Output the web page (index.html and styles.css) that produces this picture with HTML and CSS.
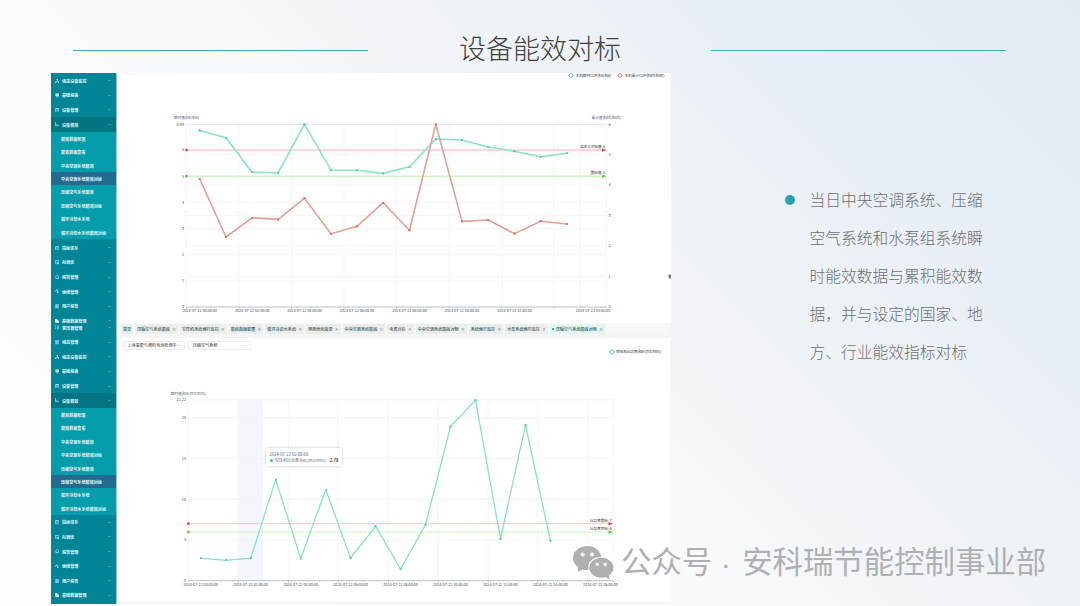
FILE: index.html
```html
<!DOCTYPE html>
<html lang="zh-CN">
<head>
  <meta charset="UTF-8" />
  <meta name="viewport" content="width=device-width, initial-scale=1.0" />
  <title>设备能效对标</title>
  <link rel="stylesheet" href="styles.css">
</head>
<body>

  <!-- 图标 -->
  <svg class="defs" width="0" height="0">
    <symbol id="i-node" viewBox="0 0 10 10"><path d="M3.5 0h3v3h-1v2h3v2H10v3H7V7h.5V6h-5v1H3v3H0V7h1.5V5h3V3h-1z"/></symbol>
    <symbol id="i-cup" viewBox="0 0 10 10"><path d="M1 1h8v5L7 8H3L1 6zM3 9h4v1H3z"/><path class="cut" d="M3 3l2 2 2-2"/></symbol>
    <symbol id="i-doc" viewBox="0 0 10 10"><path class="ln" d="M1.5 1h7v8.5h-7zM1.5 2h7M3 5h4"/></symbol>
    <symbol id="i-bars" viewBox="0 0 10 10"><path class="ln" d="M1 0v9h9M4 4v4M7 6v2"/></symbol>
    <symbol id="i-edit" viewBox="0 0 10 10"><path class="ln" d="M1 1h8v8H1zM3 7l4-4M3 3h2M5 7h2"/></symbol>
    <symbol id="i-ai" viewBox="0 0 10 10"><path class="ln" d="M1 1h7v3M1 1v6l2 2h2M5 5h4v4H6zM4 4l5 6"/></symbol>
    <symbol id="i-bell" viewBox="0 0 10 10"><path class="ln" d="M2 8V3l2-2h2l2 2v5zM3 9.5h4"/></symbol>
    <symbol id="i-pulse" viewBox="0 0 10 10"><path class="ln" d="M0 5h2l2-4 2 8 2-5h2"/></symbol>
    <symbol id="i-report" viewBox="0 0 10 10"><path class="ln" d="M0 2h10v7H0zM3 1v8M7 1v8M3 5h4"/></symbol>
    <symbol id="i-file" viewBox="0 0 10 10"><path d="M0 0h5v3h3v2h2v5H3V8H0z"/></symbol>
    <symbol id="i-list" viewBox="0 0 10 10"><path class="ln" d="M0 2h2M4 2h6M0 5h2M4 5h6M0 8h2M4 8h6"/></symbol>
    <symbol id="i-down" viewBox="0 0 10 10"><path class="ln" d="M1 3l4 4 4-4"/></symbol>
    <symbol id="i-up" viewBox="0 0 10 10"><path class="ln" d="M1 7l4-4 4 4"/></symbol>
    <marker id="dotGreen" viewBox="0 0 4 4" refX="2" refY="2" markerWidth="2.4" markerHeight="2.4" markerUnits="userSpaceOnUse"><circle class="dot-green" cx="2" cy="2" r="2"/></marker>
    <marker id="dotRed" viewBox="0 0 4 4" refX="2" refY="2" markerWidth="2.4" markerHeight="2.4" markerUnits="userSpaceOnUse"><circle class="dot-red" cx="2" cy="2" r="2"/></marker>
  </svg>

  <header class="title-bar">
    <span class="line"></span>
    <h1>设备能效对标</h1>
    <span class="line"></span>
  </header>

  <main class="content">
    <div class="screens">

      <!-- 中央空调系统能效对标 -->
      <section class="screen screen-top">
        <nav class="sidebar">
          <div class="item"><svg><use href="#i-node"/></svg><span>组态设备监控</span><svg class="arrow"><use href="#i-down"/></svg></div>
          <div class="item"><svg><use href="#i-cup"/></svg><span>基础报表</span><svg class="arrow"><use href="#i-down"/></svg></div>
          <div class="item"><svg><use href="#i-doc"/></svg><span>设备管理</span><svg class="arrow"><use href="#i-down"/></svg></div>
          <div class="item open"><svg><use href="#i-bars"/></svg><span>设备能效</span><svg class="arrow"><use href="#i-up"/></svg></div>
          <ul class="submenu">
            <li>能效数据配置</li>
            <li>能效数据查看</li>
            <li>中央空调系统能效</li>
            <li class="active">中央空调系统能效对标</li>
            <li>压缩空气系统能效</li>
            <li>压缩空气系统能效对标</li>
            <li>循环冷却水系统</li>
            <li>循环冷却水系统能效对标</li>
          </ul>
          <div class="item"><svg><use href="#i-edit"/></svg><span>指标体系</span><svg class="arrow"><use href="#i-down"/></svg></div>
          <div class="item"><svg><use href="#i-ai"/></svg><span>AI调优</span><svg class="arrow"><use href="#i-down"/></svg></div>
          <div class="item"><svg><use href="#i-bell"/></svg><span>报警管理</span><svg class="arrow"><use href="#i-down"/></svg></div>
          <div class="item"><svg><use href="#i-pulse"/></svg><span>运维管理</span><svg class="arrow"><use href="#i-down"/></svg></div>
          <div class="item"><svg><use href="#i-report"/></svg><span>用户报告</span><svg class="arrow"><use href="#i-down"/></svg></div>
          <div class="item"><svg><use href="#i-file"/></svg><span>基础数据管理</span><svg class="arrow"><use href="#i-down"/></svg></div>
        </nav>
        <div class="panel">
          <svg class="chart" width="554" height="250" viewBox="117 73 554 250">
            <path class="ghost" d="M123 74h62M188 74h62"/>
            <g class="legend">
              <path class="legend-green" d="M568.5 75.5h5"/><circle class="legend-green" cx="571" cy="75.5" r="1.9"/>
              <text x="575.5" y="77" textLength="36">主机瞬时COP(kW/kW)</text>
              <path class="legend-red" d="M617.5 75.5h5"/><circle class="legend-red" cx="620" cy="75.5" r="1.9"/>
              <text x="624.5" y="77" textLength="40">主机累计COP(kWh/kWh)</text>
            </g>
            <path class="grid" d="M186.5 150H606M186.5 176.2H606M186.5 202.3H606M186.5 228.5H606M186.5 254.7H606M186.5 280.8H606M186.5 154.6H606M186.5 185.1H606M186.5 215.5H606M186.5 246H606M186.5 276.4H606"/>
            <path class="grid" d="M186.5 124V307M239 124V307M291.5 124V307M344 124V307M396.5 124V307M449 124V307M501.5 124V307M554 124V307M580 124V307M606 124V307"/>
            <path class="grid-top" d="M186.5 124.3H606"/>
            <path class="axis" d="M186.5 307H606M186.5 307v1.5M239 307v1.5M291.5 307v1.5M344 307v1.5M396.5 307v1.5M449 307v1.5M501.5 307v1.5M554 307v1.5M606 307v1.5"/>
            <g class="name">
              <text x="174" y="119" textLength="25">瞬时值(kW/kW)</text>
              <text x="591.5" y="119" textLength="29.5">累计值(kWh/kWh)</text>
            </g>
            <g class="tick tick-left">
              <text x="184" y="125.5">6.99</text><text x="184" y="151.3">6</text><text x="184" y="177.5">5</text><text x="184" y="203.6">4</text>
              <text x="184" y="229.8">3</text><text x="184" y="256">2</text><text x="184" y="282.1">1</text><text x="184" y="308.3">0</text>
            </g>
            <g class="tick">
              <text x="608.5" y="125.5">6</text><text x="608.5" y="155.9">5</text><text x="608.5" y="186.4">4</text><text x="608.5" y="216.8">3</text>
              <text x="608.5" y="247.3">2</text><text x="608.5" y="277.7">1</text><text x="608.5" y="308.3">0</text>
            </g>
            <g class="tick tick-date">
              <text x="182.4" y="312.3" textLength="34.6">2024-07-22 00:00:00</text>
              <text x="234.9" y="312.3" textLength="34.6">2024-07-22 02:00:00</text>
              <text x="287.2" y="312.3" textLength="34.6">2024-07-22 04:00:00</text>
              <text x="339.7" y="312.3" textLength="34.6">2024-07-22 06:00:00</text>
              <text x="392.2" y="312.3" textLength="34.6">2024-07-22 08:00:00</text>
              <text x="444.7" y="312.3" textLength="34.6">2024-07-22 10:00:00</text>
              <text x="497.2" y="312.3" textLength="34.6">2024-07-22 12:00:00</text>
              <text x="575.8" y="312.3" textLength="34.6">2024-07-22 15:00:00</text>
            </g>
            <path class="limit-red" d="M186.5 150.1H604"/><circle class="end-red" cx="186.5" cy="150.1" r="1.4"/><path class="end-red" d="M602 148.4l4.5 1.7-4.5 1.7z"/>
            <path class="limit-green" d="M186.5 176.2H604"/><circle class="end-green" cx="186.5" cy="176.2" r="1.4"/><path class="end-green" d="M602 174.5l4.5 1.7-4.5 1.7z"/>
            <g class="mark">
              <text x="580" y="148" textLength="25">自定义对标值: 6</text>
              <text x="590.5" y="174.2" textLength="14.5">国标值: 5</text>
            </g>
            <polyline class="series green" points="199.6,130.5 226,137.7 252,172.2 278.2,172.7 304.5,124.3 331,170.2 357,170.2 383.2,173.4 409.5,166.8 435.8,139 462,140 488.2,147 514.5,151.3 540.6,156.7 567,153.2"/>
            <polyline class="series red" points="199.6,178.7 226,237 252,217.8 278.2,219.4 304.5,198.2 331,233.7 357,226.3 383.2,202.7 409.5,230.3 435.8,124.3 462,221.4 488.2,220 514.5,233.6 540.6,221.2 567,224"/>
            <path class="cursor" d="M668.5 274.5h2.5v4h-1.5l-1-1z"/>
          </svg>
        </div>
      </section>

      <!-- 压缩空气系统能效对标 -->
      <section class="screen screen-bottom">
        <nav class="sidebar">
          <div class="item"><svg><use href="#i-list"/></svg><span>变压器管理</span><svg class="arrow"><use href="#i-down"/></svg></div>
          <div class="item"><svg><use href="#i-report"/></svg><span>组态管理</span><svg class="arrow"><use href="#i-down"/></svg></div>
          <div class="item"><svg><use href="#i-node"/></svg><span>组态设备监控</span><svg class="arrow"><use href="#i-down"/></svg></div>
          <div class="item"><svg><use href="#i-cup"/></svg><span>基础报表</span><svg class="arrow"><use href="#i-down"/></svg></div>
          <div class="item"><svg><use href="#i-doc"/></svg><span>设备管理</span><svg class="arrow"><use href="#i-down"/></svg></div>
          <div class="item open"><svg><use href="#i-bars"/></svg><span>设备能效</span><svg class="arrow"><use href="#i-up"/></svg></div>
          <ul class="submenu">
            <li>能效数据配置</li>
            <li>能效数据查看</li>
            <li>中央空调系统能效</li>
            <li>中央空调系统能效对标</li>
            <li>压缩空气系统能效</li>
            <li class="active">压缩空气系统能效对标</li>
            <li>循环冷却水系统</li>
            <li>循环冷却水系统能效对标</li>
          </ul>
          <div class="item"><svg><use href="#i-edit"/></svg><span>指标体系</span><svg class="arrow"><use href="#i-down"/></svg></div>
          <div class="item"><svg><use href="#i-ai"/></svg><span>AI调优</span><svg class="arrow"><use href="#i-down"/></svg></div>
          <div class="item"><svg><use href="#i-bell"/></svg><span>报警管理</span><svg class="arrow"><use href="#i-down"/></svg></div>
          <div class="item"><svg><use href="#i-pulse"/></svg><span>运维管理</span><svg class="arrow"><use href="#i-down"/></svg></div>
          <div class="item"><svg><use href="#i-report"/></svg><span>用户报告</span><svg class="arrow"><use href="#i-down"/></svg></div>
          <div class="item"><svg><use href="#i-file"/></svg><span>基础数据管理</span><svg class="arrow"><use href="#i-down"/></svg></div>
        </nav>
        <div class="panel">
          <div class="tabs">
            <span class="tab">首页</span>
            <span class="tab">压缩空气系统能效<i>×</i></span>
            <span class="tab">空压机系统运行监控<i>×</i></span>
            <span class="tab">能效数据配置<i>×</i></span>
            <span class="tab">循环冷却水系统<i>×</i></span>
            <span class="tab">预测优化效果<i>×</i></span>
            <span class="tab">中央空调系统能效<i>×</i></span>
            <span class="tab">电费分析<i>×</i></span>
            <span class="tab">中央空调系统能效对标<i>×</i></span>
            <span class="tab">系统运行监控<i>×</i></span>
            <span class="tab">水泵系统运行监控<i>×</i></span>
            <span class="tab current"><b></b>压缩空气系统能效对标<i>×</i></span>
          </div>
          <div class="card">
            <div class="filters">
              <div class="select"><span>上海氢能与燃料电池检测中</span><svg><use href="#i-down"/></svg></div>
              <div class="select"><span>压缩空气系统</span><svg><use href="#i-down"/></svg></div>
            </div>
            <svg class="chart" width="553" height="251" viewBox="117 351 553 251">
              <path class="legend-green" d="M609 352h5.5"/><circle class="legend-green" cx="611.7" cy="352" r="1.9"/>
              <g class="legend"><text x="616" y="353.4" textLength="45.5">空压机比功率(kW/(m3/min))</text></g>
              <rect class="hover-band" x="238.3" y="400" width="24.8" height="180.7"/>
              <path class="grid" d="M188.3 399.8H613M188.3 417.8H613M188.3 458.5H613M188.3 499.3H613M188.3 540H613"/>
              <path class="grid" d="M188.3 400V580M238.3 400V580M288.3 400V580M338.3 400V580M388.3 400V580M438.2 400V580M488.1 400V580M538 400V580M588 400V580M613 400V580"/>
              <path class="axis" d="M188.3 580.7H613M188.3 580.7v1.5M238.3 580.7v1.5M288.3 580.7v1.5M338.3 580.7v1.5M388.3 580.7v1.5M438.2 580.7v1.5M488.1 580.7v1.5M538 580.7v1.5M588 580.7v1.5M613 580.7v1.5"/>
              <g class="name"><text x="170.7" y="395" textLength="35.3">瞬时值(kW/(m3/min))</text></g>
              <g class="tick tick-left">
                <text x="186" y="401">22.22</text><text x="186" y="419">20</text><text x="186" y="459.8">15</text>
                <text x="186" y="500.6">10</text><text x="186" y="541.3">5</text><text x="186" y="582">0</text>
              </g>
              <g class="tick tick-date">
                <text x="183.5" y="586" textLength="34.6">2024-07-22 00:00:00</text>
                <text x="233.4" y="586" textLength="34.6">2024-07-22 02:00:00</text>
                <text x="283.4" y="586" textLength="34.6">2024-07-22 04:00:00</text>
                <text x="333.3" y="586" textLength="34.6">2024-07-22 06:00:00</text>
                <text x="383.3" y="586" textLength="34.6">2024-07-22 08:00:00</text>
                <text x="433.2" y="586" textLength="34.6">2024-07-22 10:00:00</text>
                <text x="483.2" y="586" textLength="34.6">2024-07-22 12:00:00</text>
                <text x="533.1" y="586" textLength="34.6">2024-07-22 14:00:00</text>
                <text x="583.1" y="586" textLength="34.6">2024-07-22 16:00:00</text>
              </g>
              <path class="limit-red dashed" d="M188.3 523.7H610"/><circle class="end-red" cx="188.3" cy="523.7" r="1.4"/><path class="end-red" d="M608.5 522l4.5 1.7-4.5 1.7z"/>
              <path class="limit-green dashed" d="M188.3 532H610"/><circle class="end-green" cx="188.3" cy="532" r="1.4"/><path class="end-green" d="M608.5 530.3l4.5 1.7-4.5 1.7z"/>
              <g class="mark">
                <text x="590" y="521.7" textLength="21.5">比功率国标: 7</text>
                <text x="590" y="530" textLength="21.5">比功率目标: 6</text>
              </g>
              <polyline class="series green" points="200.8,558.2 225.8,560.3 250.7,558.2 275.7,479.6 300.7,558.5 325.7,489.8 350.6,558 375.6,526.3 400.6,569 425.6,524.5 450.5,426.5 475.5,400.2 500.5,539 525.5,425 550.4,541"/>
              <path class="cursor" d="M664.5 550.5l1.5-2 2 1v2h-3z"/>
            </svg>
            <div class="tooltip">
              <p>2024-07-22 02:00:00</p>
              <p><b></b><span>空压机比功率(kW/(m3/min))</span><strong>2.78</strong></p>
            </div>
          </div>
        </div>
      </section>
    </div>

    <aside class="note">
      <span class="bullet"></span>
      <p>当日中央空调系统、压缩<br>空气系统和水泵组系统瞬<br>时能效数据与累积能效数<br>据，并与设定的国家、地<br>方、行业能效指标对标</p>
    </aside>
  </main>

  <!-- 公众号水印 -->
  <div class="watermark">
    <svg width="41" height="34" viewBox="0 0 41 34">
      <path d="M14.500 0C6.500 0 0 5.300 0 12c0 3.800 2 7 5.300 9.200L4.600 26l5-2.600c1.800.5 4 .8 6.200.7A11.500 11.500 0 0 1 15.300 21C15.300 15 21 10.700 28.300 10.700C27 4.500 21.500 0 14.500 0z"/>
      <path d="M28.300 11.700c-6.700 0-12 4.400-12 10s5.300 10 12 10c1.500 0 2.900-.2 4.200-.6l4.300 2.400-1-4c3-1.900 4.700-4.700 4.700-7.800 0-5.600-5.500-10-12.200-10z"/>
      <g class="eyes"><circle cx="9.700" cy="8.600" r="2"/><circle cx="19" cy="8.600" r="2"/><circle cx="24.300" cy="18.300" r="1.700"/><circle cx="32.200" cy="18.300" r="1.700"/></g>
    </svg>
    <span>公众号</span><span class="sep">·</span><span>安科瑞节能控制事业部</span>
  </div>

</body>
</html>
```
FILE: styles.css
```css
* {
  margin: 0;
  padding: 0;
  box-sizing: border-box;
}

body {
  position: relative;
  width: 1080px;
  height: 606px;
  overflow: hidden;
  font-family: "Noto Sans CJK SC", "Noto Sans", sans-serif;
  background: linear-gradient(45deg, #fdfdfd 0%, #fcfcfd 36%, #f3f6f9 54%, #edf2f6 68%, #e9eff6 78%, #e3ebf2 100%);
}

.defs {
  position: absolute;
}

.ln {
  fill: none;
  stroke: currentColor;
  stroke-width: 1.3;
}

.cut {
  fill: none;
  stroke: #03808f;
}

/* 标题 */
.title-bar {
  display: flex;
  align-items: center;
  justify-content: space-between;
  height: 73px;
  padding: 27px 74px 0 73px;
}

.title-bar .line {
  width: 295px;
  height: 1px;
  background: #35aeb9;
}

.title-bar h1 {
  font-size: 27px;
  font-weight: 300;
  line-height: 40px;
  color: #404040;
  margin: -5px -1px 0 0;
}

.content {
  display: flex;
  padding-left: 51px;
}

.screens {
  width: 620px;
}

.screen {
  display: flex;
  background: #fff;
  overflow: hidden;
}

.screen-top {
  height: 250px;
}

.screen-bottom {
  height: 280.500px;
}

/* 侧边菜单 */
.sidebar {
  width: 66px;
  flex: none;
  background: #028596;
  border-right: 1px solid #8cc9d1;
  color: #e4f4f5;
  font-size: 4.100px;
  font-weight: 700;
}

.screen-top .sidebar {
  padding-top: .5px;
}

.screen-bottom .sidebar {
  margin-top: -2.600px;
}

.item {
  display: flex;
  align-items: center;
  height: 14.600px;
  padding: 0 5px 0 3.500px;
}

.item svg {
  width: 4.500px;
  height: 4.500px;
  margin-right: 3px;
  fill: currentColor;
}

.item .arrow {
  width: 3px;
  height: 3px;
  margin: 0 0 0 auto;
}

.item.open {
  background: #037582;
}

.submenu {
  list-style: none;
  background: #059cab;
}

.screen-top .submenu {
  margin-bottom: 1.600px;
}

.submenu li {
  height: 13.400px;
  line-height: 14px;
  padding-left: 10px;
  white-space: nowrap;
}

.screen-top .submenu li {
  line-height: 15.600px;
}

.submenu .active {
  background: #236b8e;
}

.panel {
  flex: 1;
  min-width: 0;
}

.screen-bottom .panel {
  background: #f5f5f6;
  padding-right: 1px;
}

.tabs {
  display: flex;
  gap: 2px;
  height: 11px;
  margin-bottom: 4px;
  padding: 1px 0 0 4px;
  background: #f7f7f7;
}

.tab {
  display: flex;
  align-items: center;
  height: 9.500px;
  padding: 0 2px;
  font-size: 4.100px;
  font-weight: 500;
  white-space: nowrap;
  color: #315d5d;
  background: #ededed;
}

.tab i {
  width: 4px;
  margin-left: 2px;
  font-style: normal;
  text-align: center;
  color: #777;
}

.tab b {
  width: 2px;
  height: 2px;
  margin-right: 2px;
  background: #18b5b5;
}

.tab.current {
  background: #e2f4f4;
}

.card {
  position: relative;
  height: 264px;
  background: #fff;
}

.filters {
  display: flex;
  gap: 3px;
  height: 13px;
  padding: 2.500px 0 0 5.500px;
}

.select {
  display: flex;
  align-items: center;
  justify-content: space-between;
  width: 62.500px;
  height: 9.500px;
  padding: 0 3px 0 4px;
  border: 1px solid #eee;
  font-size: 4.100px;
  white-space: nowrap;
  color: #333;
}

.select svg {
  width: 3px;
  height: 3px;
  color: #aaa;
}

/* 图表 */
.chart {
  display: block;
  overflow: visible;
  font-size: 3.700px;
}

.chart .grid {
  fill: none;
  stroke: #f3f3f5;
  stroke-width: .8;
}

.chart .grid-top {
  stroke: #e2e3e6;
}

.chart .ghost {
  stroke: #f4f4f4;
}

.chart .axis {
  fill: none;
  stroke: #b9bec8;
}

.chart .tick {
  fill: #555;
  font-size: 3.800px;
}

.chart .tick-left {
  text-anchor: end;
}

.chart .tick-date {
  font-size: 3.600px;
  text-anchor: start;
  fill: #444;
}

.chart .name {
  fill: #53627c;
}

.chart .legend,
.chart .mark {
  fill: #333;
}

.legend-green,
.legend-red {
  fill: #fff;
  stroke: #3fd2a4;
  stroke-width: .9;
}

.legend-red {
  stroke: #dd6b5c;
}

.series {
  fill: none;
  stroke-width: 1.300;
  stroke-linejoin: round;
}

.screen-top .series {
  stroke-width: 1.600;
}

.series.green {
  stroke: #89e3c4;
  marker: url(#dotGreen);
}

.series.red {
  stroke: #e3a297;
  marker: url(#dotRed);
}

.dot-green {
  fill: #55d0a8;
}

.dot-red {
  fill: #d57668;
}

.limit-red {
  stroke: #fbb8b4;
}

.limit-green {
  stroke: #baf0a9;
}

.dashed {
  stroke-dasharray: 2 .6;
}

.end-red {
  fill: #ee4238;
}

.end-green {
  fill: #58d62e;
}

.hover-band {
  fill: #f4f6fc;
}

.cursor {
  fill: #777;
}

.tooltip {
  position: absolute;
  left: 149px;
  top: 110px;
  width: 76px;
  height: 18px;
  padding: 2.500px 3.500px;
  border-radius: 1px;
  background: #fff;
  box-shadow: 0 0 3px rgba(0, 0, 0, .25);
  font-size: 4.200px;
  line-height: 6.500px;
  color: #666;
}

.tooltip p {
  display: flex;
  align-items: center;
  white-space: nowrap;
}

.tooltip b {
  width: 3px;
  height: 3px;
  margin-right: 2.500px;
  border-radius: 50%;
  background: #20c997;
}

.tooltip span {
  font-size: 4px;
}

.tooltip strong {
  margin-left: auto;
  color: #444;
}

/* 右侧说明 */
.note {
  display: flex;
  padding: 107.500px 0 0 114px;
}

.bullet {
  width: 10px;
  height: 10px;
  margin: 14px 14.500px 0 0;
  border-radius: 50%;
  background: #24a3af;
}

.note p {
  font-size: 15.750px;
  font-weight: 300;
  line-height: 38px;
  color: #6f6f6f;
}

.watermark {
  position: absolute;
  left: 573px;
  top: 546px;
  display: flex;
  height: 34px;
  font-size: 30.400px;
  line-height: 29px;
  white-space: nowrap;
  color: #afb0b1;
}

.watermark svg {
  margin-right: 7px;
  fill: #b0b0b0;
}

.watermark .eyes {
  fill: #fff;
}

.watermark .sep {
  width: 30px;
  padding-right: 3px;
  font-family: "Liberation Sans", sans-serif;
  line-height: 34px;
  text-align: center;
}
```
